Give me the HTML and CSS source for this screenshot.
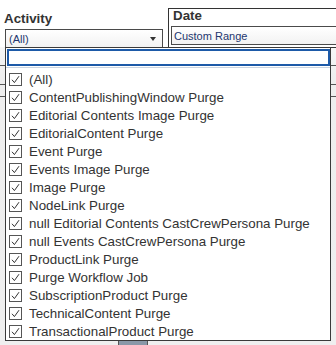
FILE: index.html
```html
<!DOCTYPE html>
<html>
<head>
    <title>Activity filter</title>
    <link rel="stylesheet" href="styles.css">
</head>
<body>

    <div class="filters">
        <div class="filter activity">
            <div class="filter-title">Activity</div>
            <div class="select">
                <span class="select-value">(All)</span>
                <span class="arrow"></span>
            </div>
        </div>
        <div class="filter date">
            <div class="filter-title">Date</div>
            <div class="select">
                <span class="select-value">Custom Range</span>
            </div>
        </div>
    </div>

    <!-- sheet behind the open dropdown -->
    <div class="sheet">
        <div class="sheet-row first"></div>
        <div class="sheet-row"></div>
        <div class="sheet-row short"></div>
        <div class="sheet-thumb"></div>
    </div>

    <div class="dropdown">
        <div class="search-wrap">
            <input class="search" type="text">
        </div>
        <div class="options">
            <div class="option"><svg class="check" viewBox="0 0 13 13"><rect x="0.5" y="0.5" width="12" height="12"/><path d="M3 6.8 L5.4 9.6 L10 3.2"/></svg>(All)</div>
            <div class="option"><svg class="check" viewBox="0 0 13 13"><rect x="0.5" y="0.5" width="12" height="12"/><path d="M3 6.8 L5.4 9.6 L10 3.2"/></svg>ContentPublishingWindow Purge</div>
            <div class="option"><svg class="check" viewBox="0 0 13 13"><rect x="0.5" y="0.5" width="12" height="12"/><path d="M3 6.8 L5.4 9.6 L10 3.2"/></svg>Editorial Contents Image Purge</div>
            <div class="option"><svg class="check" viewBox="0 0 13 13"><rect x="0.5" y="0.5" width="12" height="12"/><path d="M3 6.8 L5.4 9.6 L10 3.2"/></svg>EditorialContent Purge</div>
            <div class="option"><svg class="check" viewBox="0 0 13 13"><rect x="0.5" y="0.5" width="12" height="12"/><path d="M3 6.8 L5.4 9.6 L10 3.2"/></svg>Event Purge</div>
            <div class="option"><svg class="check" viewBox="0 0 13 13"><rect x="0.5" y="0.5" width="12" height="12"/><path d="M3 6.8 L5.4 9.6 L10 3.2"/></svg>Events Image Purge</div>
            <div class="option"><svg class="check" viewBox="0 0 13 13"><rect x="0.5" y="0.5" width="12" height="12"/><path d="M3 6.8 L5.4 9.6 L10 3.2"/></svg>Image Purge</div>
            <div class="option"><svg class="check" viewBox="0 0 13 13"><rect x="0.5" y="0.5" width="12" height="12"/><path d="M3 6.8 L5.4 9.6 L10 3.2"/></svg>NodeLink Purge</div>
            <div class="option"><svg class="check" viewBox="0 0 13 13"><rect x="0.5" y="0.5" width="12" height="12"/><path d="M3 6.8 L5.4 9.6 L10 3.2"/></svg>null Editorial Contents CastCrewPersona Purge</div>
            <div class="option"><svg class="check" viewBox="0 0 13 13"><rect x="0.5" y="0.5" width="12" height="12"/><path d="M3 6.8 L5.4 9.6 L10 3.2"/></svg>null Events CastCrewPersona Purge</div>
            <div class="option"><svg class="check" viewBox="0 0 13 13"><rect x="0.5" y="0.5" width="12" height="12"/><path d="M3 6.8 L5.4 9.6 L10 3.2"/></svg>ProductLink Purge</div>
            <div class="option"><svg class="check" viewBox="0 0 13 13"><rect x="0.5" y="0.5" width="12" height="12"/><path d="M3 6.8 L5.4 9.6 L10 3.2"/></svg>Purge Workflow Job</div>
            <div class="option"><svg class="check" viewBox="0 0 13 13"><rect x="0.5" y="0.5" width="12" height="12"/><path d="M3 6.8 L5.4 9.6 L10 3.2"/></svg>SubscriptionProduct Purge</div>
            <div class="option"><svg class="check" viewBox="0 0 13 13"><rect x="0.5" y="0.5" width="12" height="12"/><path d="M3 6.8 L5.4 9.6 L10 3.2"/></svg>TechnicalContent Purge</div>
            <div class="option"><svg class="check" viewBox="0 0 13 13"><rect x="0.5" y="0.5" width="12" height="12"/><path d="M3 6.8 L5.4 9.6 L10 3.2"/></svg>TransactionalProduct Purge</div>
        </div>
    </div>

</body>
</html>
```

FILE: styles.css
```css
body {
    margin: 0;
    width: 336px;
    height: 345px;
    overflow: hidden;
    position: relative;
    background-color: #ffffff;
    font-family: "Liberation Sans", Arial, sans-serif;
}

.filters {
    display: flex;
    height: 47px;
}

.filter-title {
    font-size: 13.33px;
    font-weight: bold;
    line-height: 15px;
    color: #333333;
}

.select {
    display: flex;
    align-items: center;
    box-sizing: border-box;
    border: 1px solid #4a4a4a;
    background: linear-gradient(#ffffff, #f2f2f2);
    font-size: 11px;
    color: #23366e;
}

/* activity filter */
.activity {
    margin-left: 4px;
    width: 159px;
}
.activity .filter-title {
    padding-top: 11px;
    margin-bottom: 3px;
}
.activity .select {
    margin-left: 1px;
    height: 18px;
    padding-left: 3px;
    border-bottom: none;
}
.arrow {
    margin-left: auto;
    margin-right: 6px;
    width: 0;
    height: 0;
    border-left: 3px solid transparent;
    border-right: 3px solid transparent;
    border-top: 4px solid #333333;
}

/* date filter */
.date {
    margin-left: 5px;
    margin-top: 8px;
    flex: 1;
    border: 1px solid #333333;
    border-right: none;
    height: 38px;
    padding-left: 2px;
}
.date .filter-title {
    padding-left: 2px;
    line-height: 14px;
    margin-bottom: 3px;
}
.date .select {
    height: 19px;
    padding-left: 2px;
    border-right: none;
}

/* sheet behind */
.sheet {
    height: 298px;
    display: flex;
    flex-direction: column;
    background: linear-gradient(#f7f7f7, #eeeeee 30px, #efefef);
}
.sheet-row {
    height: 18px;
    border-bottom: 1px solid #555555;
}
.sheet-row.first {
    height: 18px;
}
.sheet-row.short {
    height: 11px;
}
.sheet-thumb {
    margin-top: auto;
    margin-left: 118px;
    width: 28px;
    height: 4px;
    border-left: 1px solid #555555;
    border-right: 1px solid #555555;
    background-color: #8a98a8;
}

/* open dropdown */
.dropdown {
    position: absolute;
    left: 5px;
    top: 47px;
    width: 326px;
    height: 294px;
    box-sizing: border-box;
    border: 1px solid #3a3a3a;
    background-color: #ffffff;
}
.search-wrap {
    padding: 1px 0 1px 1px;
    border-bottom: 1px solid #c9d4e0;
}
.search {
    display: block;
    box-sizing: border-box;
    width: 323px;
    height: 17px;
    margin: 0;
    border: 2px solid #1d5aa8;
    outline: none;
    background: #ffffff;
}
.options {
    padding-top: 2px;
}
.option {
    display: flex;
    align-items: center;
    height: 18px;
    padding-left: 3px;
    font-size: 13.33px;
    color: #333333;
    white-space: nowrap;
}
.check {
    width: 13px;
    height: 13px;
    margin-right: 7px;
    flex: none;
    fill: #ffffff;
    stroke: #555555;
    stroke-width: 1;
}
.check path {
    fill: none;
    stroke: #333333;
}
```
